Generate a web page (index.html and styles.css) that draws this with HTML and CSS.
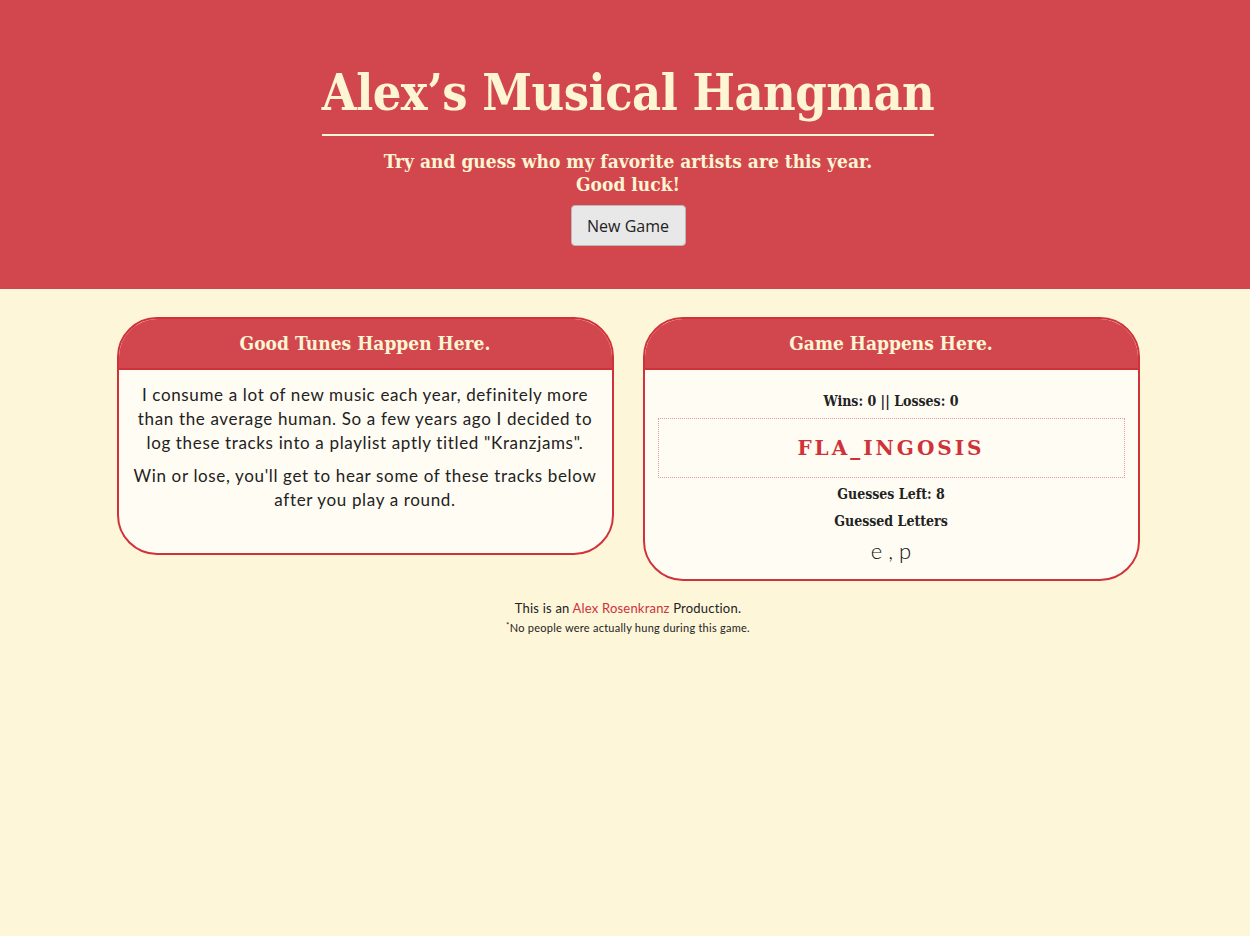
FILE: index.html
```html
<!DOCTYPE html>
<html>
<head>
<meta charset="utf-8">
<link rel="stylesheet" href="styles.css">
</head>
<body>
<header class="hero">
  <h1 class="title">Alex’s Musical Hangman</h1>
  <p class="subtitle">Try and guess who my favorite artists are this year.<br>Good luck!</p>
  <button class="btn">New Game</button>
</header>
<main class="cards">
  <section class="card">
    <div class="card-head">Good Tunes Happen Here.</div>
    <div class="card-body about">
      <p>I consume a lot of new music each year, definitely more than the average human. So a few years ago I decided to log these tracks into a playlist aptly titled "Kranzjams".</p>
      <p>Win or lose, you'll get to hear some of these tracks below after you play a round.</p>
    </div>
  </section>
  <section class="card">
    <div class="card-head">Game Happens Here.</div>
    <div class="card-body game">
      <p class="stat">Wins: 0 || Losses: 0</p>
      <div class="word">FLA_INGOSIS</div>
      <p class="stat">Guesses Left: 8</p>
      <p class="stat">Guessed Letters</p>
      <p class="letters">e , p</p>
    </div>
  </section>
</main>
<footer class="foot">
  <p class="credit">This is an <a href="#">Alex Rosenkranz</a> Production.</p>
  <p class="note"><sup>*</sup>No people were actually hung during this game.</p>
</footer>
</body>
</html>
```
FILE: styles.css
```css
html, body { margin: 0; padding: 0; }
body {
  background: #fdf6d9;
  font-family: "Lato", "Open Sans", sans-serif;
  color: #222;
  padding-left: 6px;
}
.hero {
  background: #d2474e;
  height: 289px;
  box-sizing: border-box;
  padding-top: 60px;
  text-align: center;
  color: #fdf5d3;
  margin-left: -6px;
  padding-left: 6px;
}
.title {
  display: inline-block;
  margin: 0;
  font-family: "DejaVu Serif", serif;
  font-stretch: condensed;
  font-weight: bold;
  font-size: 50px;
  line-height: 66px;
  padding-bottom: 8px;
  border-bottom: 2px solid #fdf5d3;
  letter-spacing: -0.5px;
}
.subtitle {
  margin: 14px 0 9px;
  font-family: "DejaVu Serif", serif;
  font-stretch: condensed;
  font-weight: bold;
  font-size: 19px;
  line-height: 23px;
}
.btn {
  font-family: "Open Sans", sans-serif;
  font-size: 16px;
  color: #222;
  background: #e8e8e8;
  border: 1px solid #b9b9b9;
  border-radius: 4px;
  width: 115px;
  height: 41px;
  padding: 0;
}
.cards {
  display: flex;
  justify-content: center;
  align-items: flex-start;
  gap: 29px;
  margin-top: 28px;
}
.card {
  width: 497px;
  box-sizing: border-box;
  border: 2px solid #d0323a;
  border-radius: 40px;
  overflow: hidden;
  background: #fffcf3;
}
.card-head {
  background: #d2474e;
  color: #fdf5d3;
  height: 49px;
  line-height: 49px;
  text-align: center;
  font-family: "DejaVu Serif", serif;
  font-stretch: condensed;
  font-weight: bold;
  font-size: 19px;
  border-bottom: 2px solid #d0323a;
}
.card-body { padding: 0 13px; text-align: center; }
.about { padding-top: 13px; padding-bottom: 32px; }
.about p {
  margin: 0 0 9px;
  font-size: 17px;
  line-height: 24px;
  letter-spacing: 0.65px;
  color: #222;
}
.game { padding-top: 21px; padding-bottom: 15px; }
.stat {
  margin: 0;
  font-family: "DejaVu Serif", serif;
  font-stretch: condensed;
  font-weight: bold;
  font-size: 14px;
  line-height: 21px;
  color: #222;
}
.stat + .stat { margin-top: 6px; }
.word {
  margin: 6px 0 6px;
  height: 58px;
  line-height: 58px;
  border: 1px dotted #e69a9e;
  color: #d0323a;
  font-family: "DejaVu Serif", serif;
  font-weight: bold;
  font-size: 20px;
  letter-spacing: 3px;
}
.letters {
  margin: 6px 0 0;
  font-family: "Lato", sans-serif;
  font-weight: 300;
  font-size: 22px;
  line-height: 26px;
  color: #111;
}
.foot {
  text-align: center;
  margin-top: 18px;
}
.credit { margin: 0; font-size: 13px; line-height: 18px; letter-spacing: 0.2px; }
.credit a { color: #d0323a; text-decoration: none; }
.note { margin: 1px 0 0; font-size: 11px; line-height: 15px; letter-spacing: 0.25px; }
.note sup { font-size: 8px; vertical-align: 4px; }
```
